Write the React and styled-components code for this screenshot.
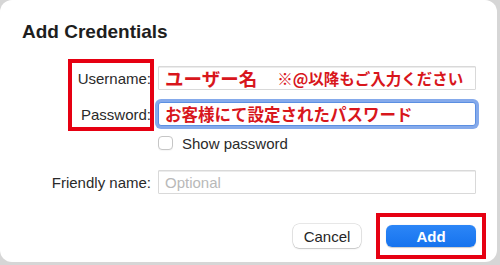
import React from "react";
import styled, { createGlobalStyle } from "styled-components";

const GlobalStyle = createGlobalStyle`
	body {
		margin: 0;
		background: #d6d6d6;
		font-family: "Liberation Sans", Arial, sans-serif;
	}
`;

const App = () => {
	return (
		<>
			<GlobalStyle />
			<Dialog>
				<Title>Add Credentials</Title>

				<Form>
					<Row>
						<Label>Username:</Label>
						<Input>
							<Note $size={18.5}>ユーザー名</Note>
							<Note $size={15.5} $gap={20}>
								※@以降もご入力ください
							</Note>
						</Input>
					</Row>

					<Row $top={12}>
						<Label>Password:</Label>
						<Input $focused>
							<Note>お客様にて設定されたパスワード</Note>
						</Input>
					</Row>

					<Row $top={9}>
						<span />
						<Check>
							<Box />
							<CheckText>Show password</CheckText>
						</Check>
					</Row>

					<Row $top={19}>
						<Label>Friendly name:</Label>
						<Input>
							<Placeholder>Optional</Placeholder>
						</Input>
					</Row>
				</Form>

				<Buttons>
					<Button>Cancel</Button>
					<Button $primary>Add</Button>
				</Buttons>

				<RedBox $x={68} $y={59} $w={86} $h={72} />
				<RedBox $x={376} $y={213} $w={110} $h={46} />
			</Dialog>
		</>
	);
};

export default App;

const Dialog = styled.div`
	position: relative;
	width: 497px;
	height: 262px;
	background: #ffffff;
	border-radius: 12px;
	box-sizing: border-box;
	padding-top: 21px;
	overflow: hidden;
`;

const Title = styled.div`
	padding-left: 22px;
	font-size: 19px;
	line-height: 22px;
	font-weight: 700;
	color: #1e1e1e;
`;

const Form = styled.div`
	display: flex;
	flex-direction: column;
	margin-top: 23px;
	padding-left: 22px;
`;

const Row = styled.div`
	display: grid;
	grid-template-columns: 129px 318px;
	column-gap: 7px;
	align-items: center;
	margin-top: ${(p) => p.$top || 0}px;
`;

const Label = styled.div`
	text-align: right;
	font-size: 15px;
	color: #2a2a2a;
	white-space: nowrap;
`;

const Input = styled.div`
	height: 24px;
	box-sizing: border-box;
	border: 1px solid ${(p) => (p.$focused ? "#5b8fe2" : "#d9d9d9")};
	box-shadow: ${(p) =>
		p.$focused ? "0 0 0 3px #85aaeb" : "inset 0 1px 0 #ececec"};
	border-radius: ${(p) => (p.$focused ? "3px" : "1px")};
	background: #fff;
	display: flex;
	align-items: center;
	padding-left: 6px;
	white-space: nowrap;
	overflow: hidden;
`;

const Note = styled.span`
	margin-left: ${(p) => p.$gap || 0}px;
	font-family: "Noto Sans CJK JP", sans-serif;
	font-weight: 700;
	font-size: ${(p) => p.$size || 16.5}px;
	color: #d8161c;
	line-height: 22px;
`;

const Placeholder = styled.span`
	font-size: 15px;
	color: #b9b9b9;
`;

const Check = styled.div`
	display: flex;
	align-items: center;
	height: 16px;
`;

const Box = styled.div`
	width: 15px;
	height: 14px;
	box-sizing: border-box;
	border: 1px solid #c6c6c6;
	border-radius: 4px;
	background: #fff;
	box-shadow: 0 1px 1px rgba(0, 0, 0, 0.04);
`;

const CheckText = styled.span`
	margin-left: 9px;
	font-size: 15px;
	color: #2a2a2a;
`;

const Buttons = styled.div`
	display: flex;
	justify-content: flex-end;
	gap: 25px;
	margin-top: 30px;
	padding-right: 21px;
`;

const Button = styled.div`
	width: ${(p) => (p.$primary ? "90px" : "68px")};
	height: ${(p) => (p.$primary ? "22px" : "24px")};
	margin-top: ${(p) => (p.$primary ? "1px" : "0")};
	border-radius: 6px;
	display: flex;
	align-items: center;
	justify-content: center;
	font-size: 15px;
	font-weight: ${(p) => (p.$primary ? 700 : 400)};
	color: ${(p) => (p.$primary ? "#ffffff" : "#262626")};
	background: ${(p) =>
		p.$primary ? "linear-gradient(#2c86f7, #1673ee)" : "#ffffff"};
	box-shadow: ${(p) =>
		p.$primary
			? "0 0.5px 1px rgba(0,0,0,0.2)"
			: "0 0 0 0.5px rgba(0,0,0,0.18), 0 1px 1.5px rgba(0,0,0,0.15)"};
`;

const RedBox = styled.div`
	position: absolute;
	left: ${(p) => p.$x}px;
	top: ${(p) => p.$y}px;
	width: ${(p) => p.$w}px;
	height: ${(p) => p.$h}px;
	box-sizing: border-box;
	border: 4px solid #e60012;
	pointer-events: none;
`;
